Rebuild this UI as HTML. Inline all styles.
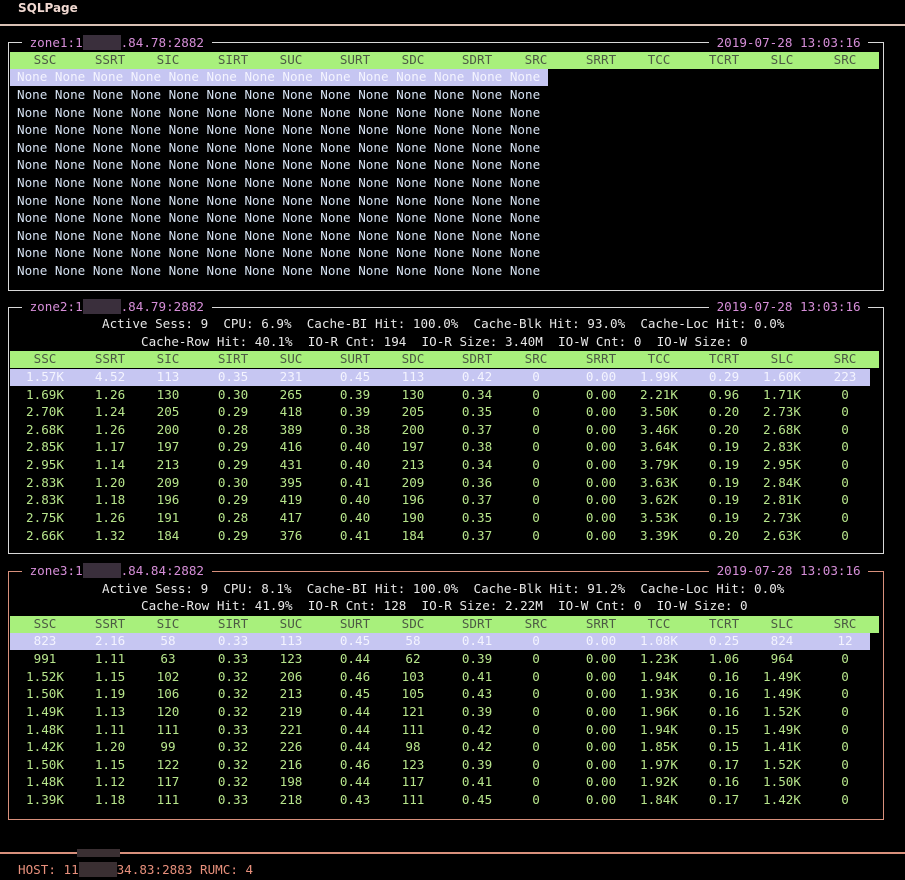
<!DOCTYPE html>
<html><head><meta charset="utf-8"><style>
body{margin:0;background:#000;width:905px;height:880px;overflow:hidden;position:relative;font-family:"DejaVu Sans Mono","Liberation Mono",monospace;font-size:12.6px;}
.a{position:absolute;white-space:pre;line-height:18px;}
.box{position:absolute;border:1.5px solid #d8d8d8;}
.hdr{position:absolute;left:10px;width:869px;height:17px;background:#a8f07c;}
.hl{position:absolute;left:10px;height:17px;background:#c6c6f2;}
.r{position:absolute;left:0;width:905px;height:18px;line-height:18px;}
.r span{position:absolute;width:70px;text-align:center;white-space:pre;}
.r span:nth-child(1){left:10px}.r span:nth-child(2){left:75px}.r span:nth-child(3){left:133px}
.r span:nth-child(4){left:198px}.r span:nth-child(5){left:256px}.r span:nth-child(6){left:320px}
.r span:nth-child(7){left:378px}.r span:nth-child(8){left:442px}.r span:nth-child(9){left:501px}
.r span:nth-child(10){left:566px}.r span:nth-child(11){left:624px}.r span:nth-child(12){left:689px}
.r span:nth-child(13){left:747px}.r span:nth-child(14){left:810px}
.h{color:#4c5a44}.w{color:#f4f4ff}.g{color:#b8e68c}
.t{background:#000;color:#d68ed8;}
.bl{background:#3a2f3c;color:#3a2f3c;}
.n{color:#d6e2f2}
.i{color:#e8e8e8}
</style></head><body>
<div class="a" style="left:18px;top:-1px;color:#f0d8d0;font-weight:bold;font-family:'DejaVu Sans','Liberation Sans',sans-serif;font-size:12px">SQLPage</div>
<div style="position:absolute;left:0;top:24px;width:905px;height:1.5px;background:#d8c0b4"></div>

<!-- zone1 -->
<div class="box" style="left:8px;top:42px;width:874px;height:247px"></div>
<div class="a t" style="left:22px;top:34px"> zone1:1<span class="bl">     </span>.84.78:2882 </div>
<div class="a t" style="left:709px;top:34px"> 2019-07-28 13:03:16 </div>
<div class="hdr" style="top:52px"></div>
<div class="r h" style="top:51px"><span>SSC</span><span>SSRT</span><span>SIC</span><span>SIRT</span><span>SUC</span><span>SURT</span><span>SDC</span><span>SDRT</span><span>SRC</span><span>SRRT</span><span>TCC</span><span>TCRT</span><span>SLC</span><span>SRC</span></div>
<div class="hl" style="top:69px;width:538px"></div>
<div class="a w" style="left:17px;top:68px">None None None None None None None None None None None None None None</div>
<div class="a n" style="left:17px;top:86px">None None None None None None None None None None None None None None</div>
<div class="a n" style="left:17px;top:104px">None None None None None None None None None None None None None None</div>
<div class="a n" style="left:17px;top:121px">None None None None None None None None None None None None None None</div>
<div class="a n" style="left:17px;top:139px">None None None None None None None None None None None None None None</div>
<div class="a n" style="left:17px;top:156px">None None None None None None None None None None None None None None</div>
<div class="a n" style="left:17px;top:174px">None None None None None None None None None None None None None None</div>
<div class="a n" style="left:17px;top:192px">None None None None None None None None None None None None None None</div>
<div class="a n" style="left:17px;top:209px">None None None None None None None None None None None None None None</div>
<div class="a n" style="left:17px;top:227px">None None None None None None None None None None None None None None</div>
<div class="a n" style="left:17px;top:244px">None None None None None None None None None None None None None None</div>
<div class="a n" style="left:17px;top:262px">None None None None None None None None None None None None None None</div>

<!-- zone2 -->
<div class="box" style="left:8px;top:307px;width:874px;height:245px"></div>
<div class="a t" style="left:22px;top:298px"> zone2:1<span class="bl">     </span>.84.79:2882 </div>
<div class="a t" style="left:709px;top:298px"> 2019-07-28 13:03:16 </div>
<div class="a i" style="left:102px;top:315px">Active Sess: 9  CPU: 6.9%  Cache-BI Hit: 100.0%  Cache-Blk Hit: 93.0%  Cache-Loc Hit: 0.0%</div>
<div class="a i" style="left:141px;top:333px">Cache-Row Hit: 40.1%  IO-R Cnt: 194  IO-R Size: 3.40M  IO-W Cnt: 0  IO-W Size: 0</div>
<div class="hdr" style="top:351px"></div>
<div class="r h" style="top:350px"><span>SSC</span><span>SSRT</span><span>SIC</span><span>SIRT</span><span>SUC</span><span>SURT</span><span>SDC</span><span>SDRT</span><span>SRC</span><span>SRRT</span><span>TCC</span><span>TCRT</span><span>SLC</span><span>SRC</span></div>
<div class="hl" style="top:369px;width:860px"></div>
<div class="r w" style="top:368px"><span>1.57K</span><span>4.52</span><span>113</span><span>0.35</span><span>231</span><span>0.45</span><span>113</span><span>0.42</span><span>0</span><span>0.00</span><span>1.99K</span><span>0.29</span><span>1.60K</span><span>223</span></div>
<div class="r g" style="top:386px"><span>1.69K</span><span>1.26</span><span>130</span><span>0.30</span><span>265</span><span>0.39</span><span>130</span><span>0.34</span><span>0</span><span>0.00</span><span>2.21K</span><span>0.96</span><span>1.71K</span><span>0</span></div>
<div class="r g" style="top:403px"><span>2.70K</span><span>1.24</span><span>205</span><span>0.29</span><span>418</span><span>0.39</span><span>205</span><span>0.35</span><span>0</span><span>0.00</span><span>3.50K</span><span>0.20</span><span>2.73K</span><span>0</span></div>
<div class="r g" style="top:421px"><span>2.68K</span><span>1.26</span><span>200</span><span>0.28</span><span>389</span><span>0.38</span><span>200</span><span>0.37</span><span>0</span><span>0.00</span><span>3.46K</span><span>0.20</span><span>2.68K</span><span>0</span></div>
<div class="r g" style="top:438px"><span>2.85K</span><span>1.17</span><span>197</span><span>0.29</span><span>416</span><span>0.40</span><span>197</span><span>0.38</span><span>0</span><span>0.00</span><span>3.64K</span><span>0.19</span><span>2.83K</span><span>0</span></div>
<div class="r g" style="top:456px"><span>2.95K</span><span>1.14</span><span>213</span><span>0.29</span><span>431</span><span>0.40</span><span>213</span><span>0.34</span><span>0</span><span>0.00</span><span>3.79K</span><span>0.19</span><span>2.95K</span><span>0</span></div>
<div class="r g" style="top:474px"><span>2.83K</span><span>1.20</span><span>209</span><span>0.30</span><span>395</span><span>0.41</span><span>209</span><span>0.36</span><span>0</span><span>0.00</span><span>3.63K</span><span>0.19</span><span>2.84K</span><span>0</span></div>
<div class="r g" style="top:491px"><span>2.83K</span><span>1.18</span><span>196</span><span>0.29</span><span>419</span><span>0.40</span><span>196</span><span>0.37</span><span>0</span><span>0.00</span><span>3.62K</span><span>0.19</span><span>2.81K</span><span>0</span></div>
<div class="r g" style="top:509px"><span>2.75K</span><span>1.26</span><span>191</span><span>0.28</span><span>417</span><span>0.40</span><span>190</span><span>0.35</span><span>0</span><span>0.00</span><span>3.53K</span><span>0.19</span><span>2.73K</span><span>0</span></div>
<div class="r g" style="top:527px"><span>2.66K</span><span>1.32</span><span>184</span><span>0.29</span><span>376</span><span>0.41</span><span>184</span><span>0.37</span><span>0</span><span>0.00</span><span>3.39K</span><span>0.20</span><span>2.63K</span><span>0</span></div>

<!-- zone3 -->
<div class="box" style="left:8px;top:571px;width:874px;height:247px;border-color:#d8907c"></div>
<div class="a t" style="left:22px;top:562px"> zone3:1<span class="bl">     </span>.84.84:2882 </div>
<div class="a t" style="left:709px;top:562px"> 2019-07-28 13:03:16 </div>
<div class="a i" style="left:102px;top:580px">Active Sess: 9  CPU: 8.1%  Cache-BI Hit: 100.0%  Cache-Blk Hit: 91.2%  Cache-Loc Hit: 0.0%</div>
<div class="a i" style="left:141px;top:597px">Cache-Row Hit: 41.9%  IO-R Cnt: 128  IO-R Size: 2.22M  IO-W Cnt: 0  IO-W Size: 0</div>
<div class="hdr" style="top:616px"></div>
<div class="r h" style="top:615px"><span>SSC</span><span>SSRT</span><span>SIC</span><span>SIRT</span><span>SUC</span><span>SURT</span><span>SDC</span><span>SDRT</span><span>SRC</span><span>SRRT</span><span>TCC</span><span>TCRT</span><span>SLC</span><span>SRC</span></div>
<div class="hl" style="top:633px;width:860px"></div>
<div class="r w" style="top:632px"><span>823</span><span>2.16</span><span>58</span><span>0.33</span><span>113</span><span>0.45</span><span>58</span><span>0.41</span><span>0</span><span>0.00</span><span>1.08K</span><span>0.25</span><span>824</span><span>12</span></div>
<div class="r g" style="top:650px"><span>991</span><span>1.11</span><span>63</span><span>0.33</span><span>123</span><span>0.44</span><span>62</span><span>0.39</span><span>0</span><span>0.00</span><span>1.23K</span><span>1.06</span><span>964</span><span>0</span></div>
<div class="r g" style="top:668px"><span>1.52K</span><span>1.15</span><span>102</span><span>0.32</span><span>206</span><span>0.46</span><span>103</span><span>0.41</span><span>0</span><span>0.00</span><span>1.94K</span><span>0.16</span><span>1.49K</span><span>0</span></div>
<div class="r g" style="top:685px"><span>1.50K</span><span>1.19</span><span>106</span><span>0.32</span><span>213</span><span>0.45</span><span>105</span><span>0.43</span><span>0</span><span>0.00</span><span>1.93K</span><span>0.16</span><span>1.49K</span><span>0</span></div>
<div class="r g" style="top:703px"><span>1.49K</span><span>1.13</span><span>120</span><span>0.32</span><span>219</span><span>0.44</span><span>121</span><span>0.39</span><span>0</span><span>0.00</span><span>1.96K</span><span>0.16</span><span>1.52K</span><span>0</span></div>
<div class="r g" style="top:721px"><span>1.48K</span><span>1.11</span><span>111</span><span>0.33</span><span>221</span><span>0.44</span><span>111</span><span>0.42</span><span>0</span><span>0.00</span><span>1.94K</span><span>0.15</span><span>1.49K</span><span>0</span></div>
<div class="r g" style="top:738px"><span>1.42K</span><span>1.20</span><span>99</span><span>0.32</span><span>226</span><span>0.44</span><span>98</span><span>0.42</span><span>0</span><span>0.00</span><span>1.85K</span><span>0.15</span><span>1.41K</span><span>0</span></div>
<div class="r g" style="top:756px"><span>1.50K</span><span>1.15</span><span>122</span><span>0.32</span><span>216</span><span>0.46</span><span>123</span><span>0.39</span><span>0</span><span>0.00</span><span>1.97K</span><span>0.17</span><span>1.52K</span><span>0</span></div>
<div class="r g" style="top:773px"><span>1.48K</span><span>1.12</span><span>117</span><span>0.32</span><span>198</span><span>0.44</span><span>117</span><span>0.41</span><span>0</span><span>0.00</span><span>1.92K</span><span>0.16</span><span>1.50K</span><span>0</span></div>
<div class="r g" style="top:791px"><span>1.39K</span><span>1.18</span><span>111</span><span>0.33</span><span>218</span><span>0.43</span><span>111</span><span>0.45</span><span>0</span><span>0.00</span><span>1.84K</span><span>0.17</span><span>1.42K</span><span>0</span></div>

<div style="position:absolute;left:0;top:852px;width:905px;height:1.5px;background:#d8907c"></div>
<div style="position:absolute;left:77px;top:849px;width:43px;height:8px;background:#3a2f32"></div>
<div class="a" style="left:18px;top:861px;color:#e8907c">HOST: 11<span style="background:#3a2f32;color:#3a2f32">     </span>34.83:2883 RUMC: 4</div>
</body></html>
